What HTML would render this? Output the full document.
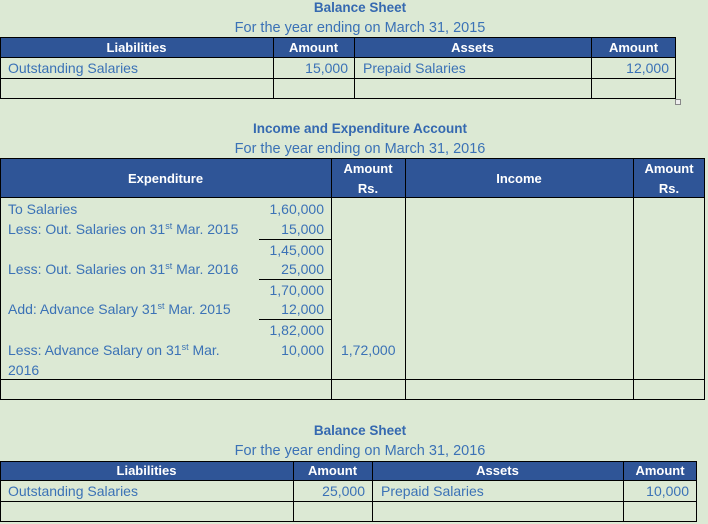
<!DOCTYPE html>
<html><head><meta charset="utf-8"><style>
*{margin:0;padding:0;box-sizing:border-box}
body{width:708px;height:524px;background:#dce9d4;position:relative;overflow:hidden;font-family:"Liberation Sans",sans-serif;font-size:14px;color:#3b72b6}
div{position:absolute}
.h{background:#2f5597}
.b{background:#000}
.w{color:#fff;font-weight:bold;font-size:13px}
.t{white-space:nowrap;line-height:16px}
.bt{font-weight:bold;color:#3569b0;font-size:13.5px}
.r{text-align:right}
.c{text-align:center}
sup{font-size:9px;vertical-align:baseline;position:relative;top:-5px;line-height:0}
</style></head><body>

<div class="t bt c" style="left:200px;top:0;width:320px">Balance Sheet</div>
<div class="t c" style="left:200px;top:20px;width:320px;font-size:14.5px">For the year ending on March 31, 2015</div>
<div class="h" style="left:0;top:37px;width:676px;height:21px"></div>
<div class="b" style="left:0;top:37px;width:676px;height:1px"></div>
<div class="b" style="left:0;top:57px;width:676px;height:1px"></div>
<div class="b" style="left:0;top:78px;width:676px;height:1px"></div>
<div class="b" style="left:0;top:98px;width:676px;height:1px"></div>
<div class="b" style="left:0;top:37px;width:1px;height:62px"></div>
<div class="b" style="left:273px;top:37px;width:1px;height:62px"></div>
<div class="b" style="left:354px;top:37px;width:1px;height:62px"></div>
<div class="b" style="left:591px;top:37px;width:1px;height:62px"></div>
<div class="b" style="left:675px;top:37px;width:1px;height:62px"></div>
<div style="left:675px;top:99px;width:6px;height:6px;border:1px solid #888;background:#eee"></div>
<div class="t w c" style="left:0;top:40px;width:273px">Liabilities</div>
<div class="t w c" style="left:273px;top:40px;width:81px">Amount</div>
<div class="t w c" style="left:354px;top:40px;width:237px">Assets</div>
<div class="t w c" style="left:591px;top:40px;width:85px">Amount</div>
<div class="t" style="left:8px;top:60px">Outstanding Salaries</div>
<div class="t r" style="left:250px;top:60px;width:98px">15,000</div>
<div class="t" style="left:363px;top:60px">Prepaid Salaries</div>
<div class="t r" style="left:591px;top:60px;width:78px">12,000</div>

<div class="t bt c" style="left:200px;top:121px;width:320px">Income and Expenditure Account</div>
<div class="t c" style="left:200px;top:141px;width:320px;font-size:14.5px">For the year ending on March 31, 2016</div>
<div class="h" style="left:0;top:158px;width:705px;height:40px"></div>
<div class="b" style="left:0;top:158px;width:705px;height:1px"></div>
<div class="b" style="left:0;top:197px;width:705px;height:1px"></div>
<div class="b" style="left:0;top:379px;width:705px;height:1px"></div>
<div class="b" style="left:0;top:399px;width:705px;height:1px"></div>
<div class="b" style="left:0;top:158px;width:1px;height:242px"></div>
<div class="b" style="left:331px;top:158px;width:1px;height:242px"></div>
<div class="b" style="left:405px;top:158px;width:1px;height:242px"></div>
<div class="b" style="left:633px;top:158px;width:1px;height:242px"></div>
<div class="b" style="left:704px;top:158px;width:1px;height:242px"></div>
<div class="t w c" style="left:0;top:171px;width:331px">Expenditure</div>
<div class="t w c" style="left:331px;top:161px;width:74px">Amount</div>
<div class="t w c" style="left:331px;top:181px;width:74px">Rs.</div>
<div class="t w c" style="left:405px;top:171px;width:228px">Income</div>
<div class="t w c" style="left:633px;top:161px;width:72px">Amount</div>
<div class="t w c" style="left:633px;top:181px;width:72px">Rs.</div>
<div class="b" style="left:259px;top:239px;width:72px;height:1px"></div>
<div class="b" style="left:259px;top:279px;width:72px;height:1px"></div>
<div class="b" style="left:259px;top:319px;width:72px;height:1px"></div>
<div class="t" style="left:8px;top:201px">To Salaries</div>
<div class="t" style="left:8px;top:221px">Less: Out. Salaries on 31<sup>st</sup> Mar. 2015</div>
<div class="t" style="left:8px;top:261px">Less: Out. Salaries on 31<sup>st</sup> Mar. 2016</div>
<div class="t" style="left:8px;top:301px">Add: Advance Salary 31<sup>st</sup> Mar. 2015</div>
<div class="t" style="left:8px;top:342px">Less: Advance Salary on 31<sup>st</sup> Mar.</div>
<div class="t" style="left:8px;top:362px">2016</div>
<div class="t r" style="left:230px;top:201px;width:94px">1,60,000</div>
<div class="t r" style="left:230px;top:221px;width:94px">15,000</div>
<div class="t r" style="left:230px;top:242px;width:94px">1,45,000</div>
<div class="t r" style="left:230px;top:261px;width:94px">25,000</div>
<div class="t r" style="left:230px;top:282px;width:94px">1,70,000</div>
<div class="t r" style="left:230px;top:301px;width:94px">12,000</div>
<div class="t r" style="left:230px;top:322px;width:94px">1,82,000</div>
<div class="t r" style="left:230px;top:342px;width:94px">10,000</div>
<div class="t" style="left:341px;top:342px">1,72,000</div>

<div class="t bt c" style="left:200px;top:423px;width:320px">Balance Sheet</div>
<div class="t c" style="left:200px;top:443px;width:320px;font-size:14.5px">For the year ending on March 31, 2016</div>
<div class="h" style="left:0;top:461px;width:697px;height:20px"></div>
<div class="b" style="left:0;top:461px;width:697px;height:1px"></div>
<div class="b" style="left:0;top:480px;width:697px;height:1px"></div>
<div class="b" style="left:0;top:501px;width:697px;height:1px"></div>
<div class="b" style="left:0;top:521px;width:697px;height:1px"></div>
<div class="b" style="left:0;top:461px;width:1px;height:61px"></div>
<div class="b" style="left:293px;top:461px;width:1px;height:61px"></div>
<div class="b" style="left:372px;top:461px;width:1px;height:61px"></div>
<div class="b" style="left:623px;top:461px;width:1px;height:61px"></div>
<div class="b" style="left:696px;top:461px;width:1px;height:61px"></div>
<div class="t w c" style="left:0;top:463px;width:293px">Liabilities</div>
<div class="t w c" style="left:293px;top:463px;width:79px">Amount</div>
<div class="t w c" style="left:372px;top:463px;width:251px">Assets</div>
<div class="t w c" style="left:623px;top:463px;width:74px">Amount</div>
<div class="t" style="left:8px;top:483px">Outstanding Salaries</div>
<div class="t r" style="left:293px;top:483px;width:72px">25,000</div>
<div class="t" style="left:381px;top:483px">Prepaid Salaries</div>
<div class="t r" style="left:623px;top:483px;width:66px">10,000</div>
</body></html>
